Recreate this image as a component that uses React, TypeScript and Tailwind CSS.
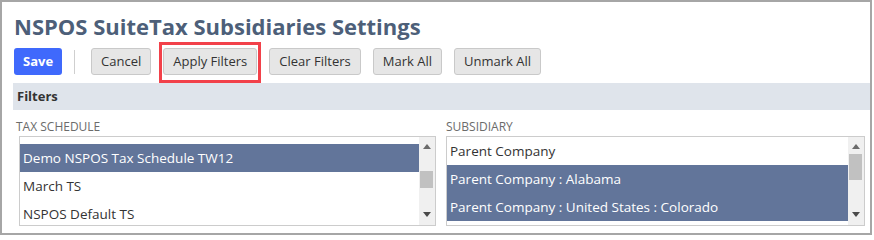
import React from 'react';

const font = { fontFamily: '"Open Sans", "Liberation Sans", sans-serif' };

const Arrow = ({ dir }: { dir: 'up' | 'down' }) => (
  <svg width="8" height="5" viewBox="0 0 8 5" className="block">
    {dir === 'up' ? <path d="M0 5 L4 0 L8 5 Z" fill="#6b6b6b" /> : <path d="M0 0 L8 0 L4 5 Z" fill="#4a4a4a" />}
  </svg>
);

const ScrollBar = ({ thumbTop, thumbHeight }: { thumbTop: number; thumbHeight: number }) => (
  <div className="relative w-[16px] h-full bg-[#f0f0f0] shrink-0">
    <div className="absolute top-[7px] left-0 right-0 flex justify-center">
      <Arrow dir="up" />
    </div>
    <div
      className="absolute left-[1px] right-[2px] bg-[#c1c1c1]"
      style={{ top: thumbTop, height: thumbHeight }}
    />
    <div className="absolute bottom-[8px] left-0 right-0 flex justify-center">
      <Arrow dir="down" />
    </div>
  </div>
);

const Row = ({ label, selected }: { label: string; selected?: boolean }) => (
  <div
    className={`h-[28px] shrink-0 flex items-center px-[3px] text-[13.5px] whitespace-nowrap ${
      selected ? 'bg-[#62759a] text-white' : 'text-[#333]'
    }`}
  >
    {label}
  </div>
);

const Btn = ({ children }: { children: React.ReactNode }) => (
  <button className="h-[27px] px-[9px] border border-[#c9c9c9] rounded-[3px] bg-[#e6e6e6] text-[13px] text-[#333] leading-none">
    {children}
  </button>
);

export default function App() {
  return (
    <div style={font} className="w-[872px] h-[235px] border-2 border-[#a6a6a6] bg-white overflow-hidden">
      {/* Title */}
      <h1 className="pl-[12px] pt-[10px] text-[22px] leading-[28px] font-bold text-[#4d5f79]">
        NSPOS SuiteTax Subsidiaries Settings
      </h1>

      {/* Toolbar */}
      <div className="mt-[8px] pl-[12px] flex items-center">
        <button className="h-[27px] px-[9px] rounded-[3px] bg-[#3f69fc] text-white font-bold text-[13px] leading-none">
          Save
        </button>
        <div className="ml-[12px] w-px h-[24px] bg-[#cfcfcf]" />
        <div className="ml-[16px] flex items-center gap-[12px]">
          <Btn>Cancel</Btn>
          <div className="relative flex">
            <Btn>Apply Filters</Btn>
            <span className="absolute -left-[4px] -right-[4px] -top-[6px] -bottom-[8px] border-[3px] border-[#f2414a] pointer-events-none" />
          </div>
          <Btn>Clear Filters</Btn>
          <Btn>Mark All</Btn>
          <Btn>Unmark All</Btn>
        </div>
      </div>

      {/* Filters header */}
      <div className="mt-[8px] ml-[11px] h-[27px] bg-[#dfe4eb] flex items-center pl-[4px] text-[13px] font-bold text-[#333]">
        Filters
      </div>

      {/* Filter lists */}
      <div className="mt-[9px] pl-[14px] flex">
        <div className="w-[420px]">
          <div className="text-[12px] leading-[16px] text-[#6b6b6b] uppercase">Tax Schedule</div>
          <div className="mt-[1px] ml-[3px] w-[417px] h-[90px] border border-[#cccccc] flex overflow-hidden">
            <div className="flex-1 flex flex-col pt-[7px]">
              <Row label="Demo NSPOS Tax Schedule TW12" selected />
              <Row label="March TS" />
              <Row label="NSPOS Default TS" />
            </div>
            <ScrollBar thumbTop={34} thumbHeight={17} />
          </div>
        </div>

        <div className="ml-[10px] w-[419px]">
          <div className="text-[12px] leading-[16px] text-[#6b6b6b] uppercase">Subsidiary</div>
          <div className="mt-[1px] w-[419px] h-[90px] border border-[#cccccc] flex overflow-hidden">
            <div className="flex-1 flex flex-col">
              <Row label="Parent Company" />
              <Row label="Parent Company : Alabama" selected />
              <Row label="Parent Company : United States : Colorado" selected />
            </div>
            <ScrollBar thumbTop={17} thumbHeight={26} />
          </div>
        </div>
      </div>
    </div>
  );
}
